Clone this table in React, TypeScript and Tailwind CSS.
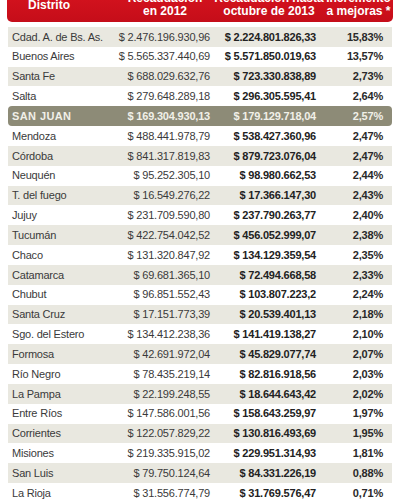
const rows: [string, string, string, string][] = [
    ["Cdad. A. de Bs. As.", "$ 2.476.196.930,96", "$ 2.224.801.826,33", "15,83%"],
    ["Buenos Aires", "$ 5.565.337.440,69", "$ 5.571.850.019,63", "13,57%"],
    ["Santa Fe", "$ 688.029.632,76", "$ 723.330.838,89", "2,73%"],
    ["Salta", "$ 279.648.289,18", "$ 296.305.595,41", "2,64%"],
    ["SAN JUAN", "$ 169.304.930,13", "$ 179.129.718,04", "2,57%"],
    ["Mendoza", "$ 488.441.978,79", "$ 538.427.360,96", "2,47%"],
    ["Córdoba", "$ 841.317.819,83", "$ 879.723.076,04", "2,47%"],
    ["Neuquén", "$ 95.252.305,10", "$ 98.980.662,53", "2,44%"],
    ["T. del fuego", "$ 16.549.276,22", "$ 17.366.147,30", "2,43%"],
    ["Jujuy", "$ 231.709.590,80", "$ 237.790.263,77", "2,40%"],
    ["Tucumán", "$ 422.754.042,52", "$ 456.052.999,07", "2,38%"],
    ["Chaco", "$ 131.320.847,92", "$ 134.129.359,54", "2,35%"],
    ["Catamarca", "$ 69.681.365,10", "$ 72.494.668,58", "2,33%"],
    ["Chubut", "$ 96.851.552,43", "$ 103.807.223,2", "2,24%"],
    ["Santa Cruz", "$ 17.151.773,39", "$ 20.539.401,13", "2,18%"],
    ["Sgo. del Estero", "$ 134.412.238,36", "$ 141.419.138,27", "2,10%"],
    ["Formosa", "$ 42.691.972,04", "$ 45.829.077,74", "2,07%"],
    ["Río Negro", "$ 78.435.219,14", "$ 82.816.918,56", "2,03%"],
    ["La Pampa", "$ 22.199.248,55", "$ 18.644.643,42", "2,02%"],
    ["Entre Ríos", "$ 147.586.001,56", "$ 158.643.259,97", "1,97%"],
    ["Corrientes", "$ 122.057.829,22", "$ 130.816.493,69", "1,95%"],
    ["Misiones", "$ 219.335.915,02", "$ 229.951.314,93", "1,81%"],
    ["San Luis", "$ 79.750.124,64", "$ 84.331.226,19", "0,88%"],
    ["La Rioja", "$ 31.556.774,79", "$ 31.769.576,47", "0,71%"],
]

export default function App() {
    return (
        <div className="w-[400px] h-[500px] overflow-hidden bg-white font-['Liberation_Sans',Arial,sans-serif]">
            {/* red header, its top line is cut off by the crop */}
            <div className="mx-[7px] -mt-[12px] h-[34px] rounded-b-[5px] bg-gradient-to-b from-[#d8141f] to-[#c50d19] pl-[21px] pr-[2px] grid grid-cols-[90px_94px_114px_65px] items-center text-white font-bold text-[12px] leading-[13px] whitespace-nowrap">
                <div>Distrito</div>
                <div className="text-center">Recaudación<br />en 2012</div>
                <div className="text-center">Recaudación hasta<br />octubre de 2013</div>
                <div className="text-center">Incremento<br />a mejoras *</div>
            </div>

            <div className="mx-[8px] mt-[5px]">
                {rows.map((r, i) => {
                    const sanJuan = r[0] === "SAN JUAN"
                    const shaded = i % 2 === 0
                    return (
                        <div
                            key={i}
                            className={
                                "h-[19.83px] pl-[4px] grid grid-cols-[106px_92px_106px_67px] items-center text-[11px] whitespace-nowrap tracking-[-0.2px] " +
                                (sanJuan
                                    ? "bg-[#8d8b77] text-[#f1f0e8] rounded-[4px] font-bold"
                                    : shaded
                                        ? "bg-[#e9e8e0] text-[#3a3a3a]"
                                        : "text-[#3a3a3a]")
                            }
                        >
                            <div className={sanJuan ? "font-bold tracking-[0.4px]" : ""}>{r[0]}</div>
                            <div className="text-right">{r[1]}</div>
                            <div className={"text-right font-bold " + (sanJuan ? "" : "text-[#222]")}>{r[2]}</div>
                            <div className={"text-right font-bold " + (sanJuan ? "" : "text-[#2a2a2a]")}>{r[3]}</div>
                        </div>
                    )
                })}
            </div>
        </div>
    )
}
